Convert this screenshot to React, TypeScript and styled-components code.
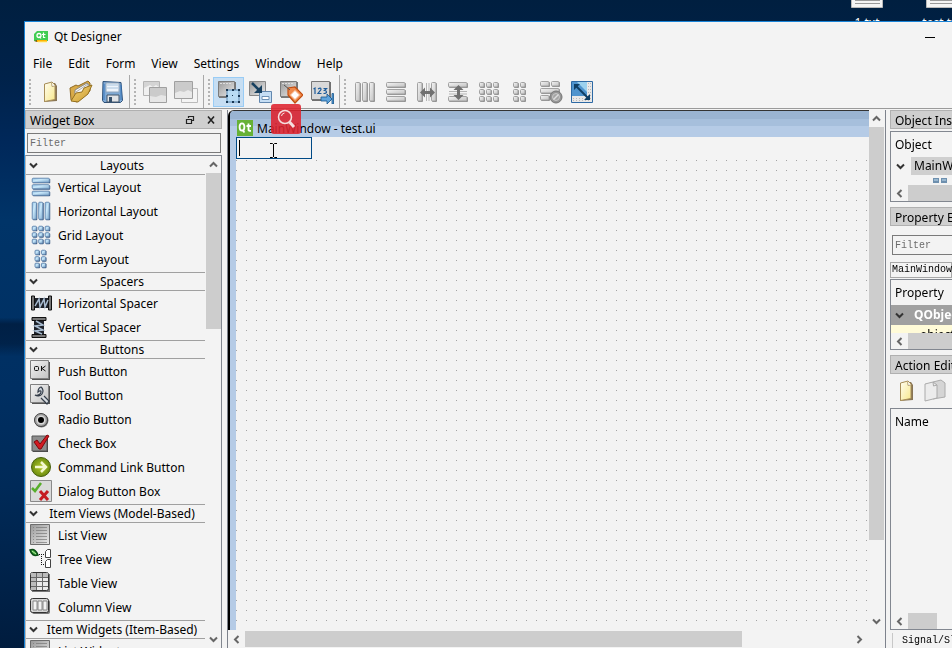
import React from "react";
import styled, { createGlobalStyle, css } from "styled-components";

const GlobalStyle = createGlobalStyle`
  *, *::before, *::after { box-sizing: border-box; }
  body { margin: 0; overflow: hidden; background: #00264d; }
  body, button, input, select {
    font-family: "Noto Sans", "Noto Sans CJK SC", sans-serif;
    font-size: 12px;
    line-height: 18px;
    color: #000;
  }
  button { border: 0; padding: 0; background: none; text-align: left; }
  svg { display: block; flex: none; }
`;

/* ---------- desktop and window ---------- */

const Desktop = styled.div`
  position: relative;
  display: flex;
  height: 100vh;
  padding: 21px 0 0 24px;
  overflow: hidden;
  background:
    linear-gradient(180deg, transparent 49%, rgba(0, 20, 48, 0.6) 50%, rgba(0, 20, 48, 0.5) 53%, transparent 55%),
    linear-gradient(180deg, #001f40 0, #00224a 12%, #00285a 22%, #003468 34%, #002f62 60%, #002a58 75%, #001c3e 100%);
`;

const DesktopFiles = styled.div`
  position: absolute;
  top: 0;
  right: 0;
  display: flex;
  width: 101px;
  height: 21px;
  gap: 43px;
  overflow: hidden;
`;

const DesktopFile = styled.div`
  display: flex;
  flex: none;
  flex-direction: column;
  align-items: center;
  width: 32px;
  gap: 6px;
  color: #fff;
  font-size: 12px;
  line-height: 18px;
  white-space: nowrap;
`;

const Window = styled.main`
  position: relative;
  display: flex;
  flex: 1;
  flex-direction: column;
  min-width: 0;
  border-top: 1px solid #1883d7;
  border-left: 1px solid #1883d7;
  background: #f3f3f3;
`;

const TitleBar = styled.header`
  display: flex;
  align-items: center;
  flex: none;
  height: 30px;
  padding: 0 16px 0 8px;
  gap: 5px;
`;

const Title = styled.h1`
  flex: 1;
  margin: 0;
  font-size: 12px;
  font-weight: 400;
`;

const MenuBar = styled.nav`
  display: flex;
  align-items: center;
  flex: none;
  height: 23px;
  padding-left: 8px;
  gap: 16px;
`;

const ToolBar = styled.div`
  display: flex;
  flex: none;
  height: 34px;
  border-bottom: 1px solid #9a9a9a;
`;

const ToolGroup = styled.div<{ $last?: boolean }>`
  display: flex;
  align-items: center;
  padding: 0 2px 0 4px;
  border-right: ${(p) => (p.$last ? "0" : "1px solid #a9a9a9")};
`;

const Handle = styled.span`
  width: 2px;
  height: 26px;
  margin-right: 3px;
  background: repeating-linear-gradient(#b4b4b4 0 2px, transparent 2px 4px);
`;

const ToolButton = styled.button<{ $on?: boolean }>`
  display: grid;
  place-items: center;
  width: 31px;
  height: 30px;
  ${(p) =>
    p.$on &&
    css`
      border: 1px solid #99ccf5;
      background: #c6def3;
    `}
`;

const Body = styled.div`
  display: flex;
  flex: 1;
  min-height: 0;
  padding-top: 1px;
`;

/* ---------- shared dock parts ---------- */

const DockTitle = styled.h2`
  display: flex;
  align-items: center;
  flex: none;
  height: 19px;
  margin: 0;
  padding: 0 5px 0 4px;
  gap: 11px;
  border: 1px solid #b0b0b0;
  background: #cfcfcf;
  font-size: 12px;
  font-weight: 400;
  white-space: nowrap;

  span { flex: 1; padding-top: 2px; }
`;

const FilterInput = styled.input`
  flex: none;
  height: 20px;
  min-width: 0;
  padding: 0 2px;
  border: 1px solid #7a7a7a;
  border-radius: 0;
  outline: 0;
  background: #f3f3f3;
  font-family: "Liberation Mono", monospace;
  font-size: 10px;

  &::placeholder { color: #6c6c6c; opacity: 1; }
`;

const Track = styled.div<{ $dir: "row" | "column" }>`
  display: flex;
  flex: none;
  flex-direction: ${(p) => p.$dir};
  ${(p) => (p.$dir === "row" ? "height: 16px;" : "width: 15px;")}
`;

const TrackRun = styled.div<{ $dir: "row" | "column" }>`
  display: flex;
  flex: 1;
  flex-direction: ${(p) => p.$dir};
`;

const Thumb = styled.div<{ $part: number }>`
  flex: 0 0 ${(p) => p.$part}%;
  background: #cdcdcd;
`;

const ArrowButton = styled.button`
  display: grid;
  place-items: center;
  flex: none;
  width: 17px;
  height: 17px;
`;

const VArrowButton = styled(ArrowButton)`
  width: 15px;
`;

/* ---------- widget box ---------- */

const WidgetDock = styled.aside`
  display: flex;
  flex: none;
  flex-direction: column;
  width: 197px;
`;

const WidgetFilter = styled(FilterInput)`
  margin: 4px 1px 2px 2px;
`;

const WidgetList = styled.div`
  display: flex;
  flex: 1;
  min-height: 0;
  border: 1px solid #828790;
  border-bottom: 0;
  border-left-color: #b8b8b8;
`;

const WidgetScroll = styled.div`
  flex: 1;
  overflow: hidden;
  margin-right: 1px;
`;

const SectionHead = styled.button`
  display: flex;
  align-items: center;
  width: 100%;
  height: 19px;
  padding-left: 2px;
  border-top: 1px solid #a0a0a0;
  border-bottom: 1px solid #a0a0a0;
  white-space: nowrap;

  section:first-child > & { border-top-color: transparent; }
  span { flex: 1; text-align: center; }
`;

const Items = styled.ul`
  margin: 0;
  padding: 0 0 1px;
  list-style: none;
`;

const Item = styled.li`
  display: flex;
  align-items: center;
  height: 24px;
  padding-left: 3px;
  gap: 5px;
  white-space: nowrap;

  span { padding-top: 2px; }
`;

/* ---------- form editor ---------- */

const Editor = styled.section`
  display: flex;
  flex: 1;
  flex-direction: column;
  min-width: 0;
  margin-left: 5px;
  border: solid #7d828c;
  border-width: 0 1px;
`;

const EditorRow = styled.div`
  display: flex;
  flex: 1;
  min-height: 0;
  padding-right: 1px;
`;

const FormWindow = styled.div`
  display: flex;
  flex: 1;
  flex-direction: column;
  min-width: 0;
  border-top: 1px solid #333;
  border-left: 2px solid #000;
  border-top-left-radius: 6px;
`;

const FormTitle = styled.div`
  display: flex;
  align-items: center;
  flex: none;
  height: 26px;
  padding: 8px 0 0 7px;
  gap: 4px;
  border-top-left-radius: 4px;
  background: linear-gradient(#9ab4d2 0 8px, #a6bfdc 8px 15px, #b5cbe6 15px);

  span { padding-top: 2px; }
`;

const FormInner = styled.div`
  display: flex;
  flex: 1;
  flex-direction: column;
  align-items: flex-start;
  min-height: 0;
  border-left: 6px solid #b5cbe6;
  background: #f3f3f3;
`;

const MenuEdit = styled.input`
  flex: none;
  width: 76px;
  height: 22px;
  margin-bottom: 1px;
  padding: 0 3px;
  border: 1px solid #004a86;
  border-radius: 0;
  outline: 0;
  background: linear-gradient(#000, #000) 2px 2px / 1px 16px no-repeat #f3f3f3;
  caret-color: transparent;
`;

const DotCanvas = styled.div`
  flex: 1;
  align-self: stretch;
  background: conic-gradient(from 0deg at 1px 1px, transparent 75%, #a4a4a4 0) 0 0 / 10px 10px;
`;

const EditorFoot = styled.div`
  padding: 1px 17px 1px 0;
`;

/* ---------- right docks ---------- */

const RightDocks = styled.aside`
  display: flex;
  flex: none;
  flex-direction: column;
  width: 62px;
  margin-left: 4px;
  overflow: hidden;
  white-space: nowrap;
`;

const RightTitle = styled(DockTitle)`
  border-right: 0;
`;

const Panel = styled.div<{ $height?: number }>`
  display: flex;
  flex: ${(p) => (p.$height ? `0 0 ${p.$height}px` : "1")};
  flex-direction: column;
  overflow: hidden;
  border: 1px solid #828790;
  border-right: 0;
`;

const ObjectPanel = styled(Panel)`
  margin: 2px 0 5px;
`;

const PanelHead = styled.div`
  flex: none;
  height: 25px;
  padding-left: 4px;
  line-height: 25px;
`;

const TreeRow = styled.div`
  display: flex;
  align-items: center;
  flex: none;
  height: 18px;
  padding-left: 4px;
  gap: 5px;
`;

const Selected = styled.span`
  flex: 1;
  padding-left: 3px;
  background: #cfcfcf;
`;

const ChildPeek = styled.div`
  flex: 1;
  padding: 2px 0 0 42px;
  overflow: hidden;
`;

const PropertyFilter = styled(FilterInput)`
  width: 120px;
  margin: 9px 0 7px 2px;
`;

const ClassLabel = styled.div`
  flex: none;
  height: 16px;
  margin-bottom: 1px;
  padding-left: 1px;
  border: 1px solid #a8a8a8;
  font-family: "Liberation Mono", monospace;
  font-size: 10px;
  line-height: 14px;
`;

const GroupRow = styled.div`
  display: flex;
  align-items: center;
  flex: none;
  height: 20px;
  padding-left: 3px;
  gap: 9px;
  background: #a0a0a0;
  color: #fff;
  font-weight: 700;
`;

const PropertyPeek = styled.div`
  flex: 1;
  padding-left: 29px;
  overflow: hidden;
  background: #fffbd8;
  line-height: 20px;
`;

const ActionTitle = styled(RightTitle)`
  margin-top: 5px;
`;

const ActionTools = styled.div`
  display: flex;
  align-items: center;
  flex: none;
  height: 34px;
  padding-left: 4px;
  gap: 5px;
`;

const ActionBody = styled.div`
  flex: 1;
`;

const TabStrip = styled.div`
  flex: none;
  height: 18px;
  padding-left: 2px;
`;

const Tab = styled.button`
  width: 110px;
  height: 17px;
  padding-left: 9px;
  border: 1px solid #c8c8c8;
  border-top: 0;
  font-family: "Liberation Mono", monospace;
  font-size: 10px;
  line-height: 16px;
`;

/* ---------- overlays ---------- */

const SearchBadge = styled.button`
  position: absolute;
  top: 82px;
  left: 246px;
  display: grid;
  place-items: center;
  width: 30px;
  height: 30px;
  border-radius: 3px;
  background: rgba(222, 34, 46, 0.88);
`;

const TextCursor = styled.svg`
  position: absolute;
  top: 120px;
  left: 244px;
`;

/* ---------- icons ---------- */

type ArrowDir = "up" | "down" | "left" | "right";
const turn: Record<ArrowDir, number> = { down: 0, left: 90, up: 180, right: 270 };

const Chevron = ({ dir = "down", color = "#666" }: { dir?: ArrowDir; color?: string }) => (
  <svg width="11" height="11" viewBox="0 0 11 11" aria-hidden="true">
    <path d="M2 3.5 5.5 7 9 3.5" fill="none" stroke={color} strokeWidth="2" transform={`rotate(${turn[dir]} 5.5 5.5)`} />
  </svg>
);

const HiddenSvg = styled.svg`
  position: absolute;
`;

const IconDefs = () => (
  <HiddenSvg width="0" height="0" aria-hidden="true">
    <defs>
      <linearGradient id="blue" x1="0" y1="0" x2="1" y2="1"><stop offset="0" stopColor="#8fc0e4" /><stop offset=".4" stopColor="#c9e8fa" /><stop offset="1" stopColor="#7ca6cc" /></linearGradient>
      <linearGradient id="grey" x1="0" y1="0" x2="1" y2="1"><stop offset="0" stopColor="#f4f4f4" /><stop offset="1" stopColor="#c2c2c2" /></linearGradient>
      <linearGradient id="steel" x1="0" y1="0" x2="1" y2="1"><stop offset="0" stopColor="#989898" /><stop offset="1" stopColor="#ececec" /></linearGradient>
      <linearGradient id="page" x1="0" y1="0" x2="1" y2="1"><stop offset="0" stopColor="#fffdf0" /><stop offset="1" stopColor="#f8e88c" /></linearGradient>
      <linearGradient id="gold" x1="0" y1="0" x2="1" y2="1"><stop offset="0" stopColor="#f8d878" /><stop offset="1" stopColor="#c89830" /></linearGradient>
      <radialGradient id="green"><stop offset="0" stopColor="#b4c82c" /><stop offset="1" stopColor="#6c8c10" /></radialGradient>
    </defs>
  </HiddenSvg>
);

const Svg = ({ children, small }: { children: React.ReactNode; small?: boolean }) => (
  <svg width="24" height="24" viewBox={small ? "-1 -1 26 26" : "0 0 24 24"} aria-hidden="true">{children}</svg>
);

type Box = [number, number, number, number];
const vBars: Box[] = [[3, 3, 5, 19], [10, 3, 5, 19], [17, 3, 5, 19]];
const hBars: Box[] = [[3, 3, 19, 5], [3, 10, 19, 5], [3, 17, 19, 5]];
const gridCells: Box[] = [3, 10, 17].flatMap((y) => [3, 10, 17].map((x): Box => [x, y, 5, 5]));
const formCells: Box[] = [3, 10, 17].flatMap((y) => [6, 13].map((x): Box => [x, y, 5, 5]));

const Boxes = ({ boxes, grey }: { boxes: Box[]; grey?: boolean }) => (
  <>
    {boxes.map(([x, y, w, h]) => (
      <g key={`${x}-${y}`}>
        <rect x={x} y={y} width={w} height={h} rx="1" fill={grey ? "#8f8f8f" : "#425f86"} />
        <rect x={x - 0.5} y={y - 0.5} width={w - 0.5} height={h - 0.5} rx="1" fill={grey ? "url(#grey)" : "url(#blue)"} stroke={grey ? "#a2a2a2" : "#6488b0"} />
      </g>
    ))}
  </>
);

const QtIcon = () => (
  <svg width="16" height="16" viewBox="0 0 16 16" aria-hidden="true">
    <path d="M4 2h11v10H1V5z" fill="#41cd52" />
    <circle cx="6" cy="6.500" r="2" fill="none" stroke="#fff" strokeWidth="1.300" />
    <path d="m6.500 7.500 1.500 2M10.500 3.500v5h1.800M9 5.500h3.500" fill="none" stroke="#fff" strokeWidth="1.200" />
    <path d="M4 11h10v2H4z" fill="#ffb400" /><path d="m1 12 3-1v2z" fill="#775500" /><path d="M5 13h9" stroke="#fff08a" />
  </svg>
);

const FormQtIcon = () => (
  <svg width="16" height="16" viewBox="0 0 16 16" aria-hidden="true">
    <path d="M0 0h16v16H0z" fill="#67b136" />
    <ellipse cx="5" cy="7" rx="2.400" ry="3.600" fill="none" stroke="#fff" strokeWidth="1.800" />
    <path d="m5.500 10 2 2.500M11.500 3.500v6.500q0 1 2.500.8M9.500 6h4.500" fill="none" stroke="#fff" strokeWidth="1.800" />
  </svg>
);

const NewIcon = () => (
  <Svg>
    <path d="m9 3-3 2v17l13-1V6l-2-3z" fill="#877455" />
    <path d="M6.500 4 14 2l3 3v14.500l-10.500 2z" fill="url(#page)" stroke="#a88e58" />
    <path d="m13.500 2.500.5 4 3-.5" fill="#fff" stroke="#b9a679" />
  </Svg>
);

const OpenIcon = () => (
  <Svg>
    <path d="m1 8 6-3 2 1 10-5 2 2v8L8 22l-6-2z" fill="#d8aa48" stroke="#8f6a24" />
    <path d="m6 10 12-7 2 2-2 9L6 19z" fill="#f8f8f8" stroke="#888" />
    <path d="m7 12 12-8v8" fill="none" stroke="#aaa" />
    <path d="m2 21 5-8 6-1 2-4 8-3-4 9L9 22z" fill="url(#gold)" stroke="#94701f" />
  </Svg>
);

const SaveIcon = () => (
  <Svg>
    <path d="m3 1.500 18 1 1.500 18-2 2H4l-1.500-2z" fill="#7fa9d4" stroke="#2d5078" />
    <path d="M6 3h13v9H6z" fill="#eef4fb" stroke="#93a7bc" />
    <path d="M7 5h11M7 8h11" stroke="#cbdcec" strokeWidth="2" />
    <path d="M7 15h12v7H7z" fill="#e1e3e6" stroke="#46586d" /><path d="M9 17h3v5H9z" fill="#36506b" />
    <path d="M4 4v16M21 5v15" stroke="#3a78bd" />
  </Svg>
);

const SendBackIcon = ({ front }: { front?: boolean }) => (
  <Svg>
    {!front && (
      <>
        <path d="M.5 1.500h16v14H.5z" fill="#f0f0f0" stroke="#b4b4b4" /><path d="M1 2h15v5l-3-2-3 2-3-2-6 3z" fill="#d4d4d4" />
        <path d="M6.500 7.500h17v15h-17z" fill="#e6e6e6" stroke="#a0a0a0" /><path d="M7 8h16v8l-5-1-5 2-6-1z" fill="#cbcbcb" />
      </>
    )}
    {front && (
      <>
        <path d="M7.500 8.500h16v14h-16z" fill="#f4f4f4" stroke="#bababa" />
        <path d="M.5 1.500h18v17H.5z" fill="#e9e9e9" stroke="#a0a0a0" /><path d="M1 2h17v10l-4-2-4 2-4-1-5 2z" fill="#cbcbcb" />
      </>
    )}
  </Svg>
);

const EditBase = () => (
  <>
    <path d="M2 2h17v16H2z" fill="#777" /><path d="M1.500 1.500h16v15h-16z" fill="url(#steel)" stroke="#7b7b7b" />
    <path d="M3 3.500h12" stroke="#dedede" strokeDasharray="2 1" />
  </>
);

const WidgetsIcon = () => (
  <Svg>
    <EditBase />
    <path d="M10 10h12v12H10z" fill="#b9dcf4" stroke="#5d8bb4" />
    {[10, 16, 22].flatMap((y) =>
      [10, 16, 22].map((x) => {
        const side = x === 16 && y === 16 ? 1 : 2;
        return <rect key={`${x}-${y}`} x={x - 1} y={y - 1} width={side} height={side} fill="#173652" />;
      }),
    )}
  </Svg>
);

const SignalsIcon = () => (
  <Svg>
    <path d="M1.500 1.500h16v14h-16z" fill="url(#steel)" stroke="#868686" />
    <path d="M11.500 11.500h12v11h-12z" fill="#c5def4" stroke="#6287ae" /><path d="M14 16.500h7v3h-7z" fill="#fff" stroke="#6c91b5" />
    <path d="m4 3 7 7" stroke="#17405f" strokeWidth="2.500" /><path d="M14 5v8H6z" fill="#17405f" />
  </Svg>
);

const BuddiesIcon = () => (
  <Svg>
    <EditBase />
    <path d="m9 8 7-1 8 8-8 8-7-8z" fill="#ef8a4c" stroke="#c24d10" strokeWidth="1.200" />
    <path d="m16 10.500 4.500 4.500-4.500 4.500-4.500-4.500z" fill="#fff" stroke="#f8c8a8" /><path d="m5 5 6 5" stroke="#555" />
  </Svg>
);

const TabOrderIcon = () => (
  <Svg>
    <path d="M2 2h19v19H2z" fill="#707070" /><path d="M1.500 1.500h18v18h-18z" fill="#d9d9d9" stroke="#777" />
    <path d="m3.500 9 1.500-1v6M8 9q3-2 3 .5L8 13.500h3.500M13.500 8.500h3l-2 2q2 0 2 1.500t-3 1.500" fill="none" stroke="#1d5b99" strokeWidth="1.200" />
    <path d="M11 17h6v-3l5 5-5 5v-3h-6zM22 13.500h1.500V24H22z" fill="#5ea3dc" stroke="#17568d" strokeWidth=".8" />
  </Svg>
);

const HSplitIcon = () => (
  <Svg>
    <Boxes boxes={[[3, 3, 5, 19], [17, 3, 5, 19]]} grey />
    <path d="M11.500 3v18M14 3v18" stroke="#b5b5b5" /><path d="m5 12.500 5-5v3.500h5V7.500l5 5-5 5V14h-5v3.500z" fill="#707070" />
  </Svg>
);

const VSplitIcon = () => (
  <Svg>
    <Boxes boxes={[[3, 3, 19, 5], [3, 17, 19, 5]]} grey />
    <path d="M3 11.500h18M3 14h18" stroke="#b5b5b5" /><path d="m12.500 5 5 5H14v5h3.500l-5 5-5-5H11v-5H7.500z" fill="#707070" />
  </Svg>
);

const BreakIcon = () => (
  <Svg>
    <Boxes boxes={[[2, 2, 9, 5], [13, 2, 8, 5], [2, 9, 19, 5], [2, 16, 9, 5]]} grey />
    <circle cx="17" cy="17" r="6" fill="#969696" stroke="#777" /><circle cx="17" cy="17" r="3.500" fill="#a5a5a5" stroke="#c8c8c8" /><path d="m14.500 19.500 5-5" stroke="#ddd" strokeWidth="1.500" />
  </Svg>
);

const AdjustIcon = () => (
  <Svg>
    <path d="M1.500 1.500h21v21h-21z" fill="#e8e8e8" stroke="#2d69a4" />
    <path d="M2 2h15v14H2z" fill="#4f94ce" /><path d="M7 2h10v10z" fill="#9bd1ee" />
    <path d="M3 18.500h18M3 20.500h18M18.500 3v18M20.500 3v18" stroke="#b9b9b9" strokeDasharray="1 2" />
    <path d="m6 6 12 12" stroke="#103f65" strokeWidth="2" /><path d="M4 4h6l-6 6zM20 20h-6l6-6z" fill="#103f65" />
  </Svg>
);

const SpringShape = () => (
  <>
    <path d="M2.500 5h3v14h-3zM19.500 5h3v14h-3z" fill="#777" stroke="#111" />
    <path d="M6 7h13v10H6z" fill="#1e222a" /><path d="m6 15 4-7 1 8 4-8 1 8 3-7" fill="none" stroke="#a9bdd2" strokeWidth="1.500" />
  </>
);

const HSpacerIcon = () => (
  <Svg><SpringShape /></Svg>
);

const VSpacerIcon = () => (
  <Svg><g transform="translate(-2 0) rotate(90 12 12)"><SpringShape /></g></Svg>
);

const Plate = () => (
  <><path d="M3 3h18v18H3z" fill="#555" /><path d="M1.500 1.500h18v18h-18z" fill="url(#grey)" stroke="#808080" /></>
);

const PushIcon = () => (
  <Svg>
    <Plate />
    <rect x="5.500" y="7.500" width="4" height="4" rx="1" fill="none" stroke="#111" /><path d="M12.500 7v5M16.500 7l-3.500 2.500 3.500 2.500" fill="none" stroke="#111" />
  </Svg>
);

const ToolIcon = () => (
  <Svg>
    <Plate />
    <path d="M12 4a5 5 0 1 1-6 8c3 1 6-1 6-3s-2-1-3 0q0-4 3-5z" fill="#c9d0d8" stroke="#333c48" strokeWidth="1.200" />
    <path d="m15 13 5 5-2 3-6-6" fill="#d7dce1" stroke="#333c48" strokeWidth="1.200" />
  </Svg>
);

const RadioIcon = () => (
  <Svg><circle cx="12.500" cy="13.500" r="7" fill="#777" /><circle cx="12" cy="13" r="6.500" fill="#a5a5a5" stroke="#444" /><circle cx="12" cy="13" r="4.500" fill="#d8d8d8" /><circle cx="12" cy="13" r="3" fill="#000" /></Svg>
);

const CheckIcon = () => (
  <Svg>
    <path d="M4 6h15v15H4z" fill="#444" /><path d="M3 5h15v15H3z" fill="#8d8d8d" stroke="#555" />
    <path d="m5 11 3-2 3 4 7-9 2 1-8 13h-2z" fill="#d21b22" stroke="#7d080d" />
  </Svg>
);

const CommandIcon = () => (
  <Svg><circle cx="12" cy="12" r="9.500" fill="url(#green)" stroke="#48600e" /><path d="M6 12h11m-5-5 5 5-5 5" fill="none" stroke="#f3f8d0" strokeWidth="2.500" /></Svg>
);

const DialogIcon = () => (
  <Svg>
    <path d="M1.500 1.500h21v21h-21z" fill="#dadada" stroke="#8a8a8a" />
    <path d="m3 9 3 3 6-8" fill="none" stroke="#58ae2b" strokeWidth="2.500" /><path d="m11 12 8 9m0-9-8 9" stroke="#c51c22" strokeWidth="3" />
  </Svg>
);

const ListIcon = () => (
  <Svg>
    <path d="M1.500 1.500h19v20h-19z" fill="url(#steel)" stroke="#6e6e6e" />
    <path d="M4 4.500h14M4 7.500h14M4 10.500h14M4 13.500h14M4 16.500h14M4 19.500h14" stroke="#777" strokeOpacity=".7" strokeDasharray="1 2 11 9" />
  </Svg>
);

const TreeIcon = () => (
  <Svg>
    <path d="M1 3q5-2 8 5-6 2-8-5z" fill="#36a33a" stroke="#0b4b16" strokeWidth="1.500" /><path d="m3 4 4 3" stroke="#bdeb9b" />
    <path d="M10 7.500h6M12.500 7v10M12 17.500h4" fill="none" stroke="#111" strokeDasharray="1 1" />
    {[3, 13].map((y) => <path key={y} d={`M18.500 ${y - 0.5}h3v8h-5v-6z`} fill="#fff" stroke="#444" />)}
  </Svg>
);

const TableIcon = () => (
  <Svg>
    <path d="M3 3h18v18H3z" fill="#777" /><rect x="1.500" y="1.500" width="18" height="18" rx="2" fill="#e9e9e9" stroke="#333" />
    <path d="M2 2h17v4H2zM2 6h5v13H2z" fill="#bbb" /><path d="M2 6.500h17M2 10.500h17M2 15.500h17M7.500 2v17M13.500 2v17" stroke="#666" />
  </Svg>
);

const ColumnIcon = () => (
  <Svg>
    <rect x="3" y="5" width="18" height="14" rx="2" fill="#777" /><rect x="1.500" y="3.500" width="18" height="14" rx="2" fill="#d5d5d5" stroke="#333" />
    <path d="M4 6h4v9H4zM9 6h4v9H9zM14 6h4v9h-4z" fill="#f3f3f3" stroke="#888" />
  </Svg>
);

const FloatIcon = () => (
  <svg width="10" height="10" viewBox="0 0 10 10" aria-hidden="true"><path d="M3.500 3V1.500h5v4H7M1.500 4.500h5v4h-5zM3 1.500h6M1 4.500h6" fill="none" stroke="#222" strokeWidth="1.200" /></svg>
);
const CloseIcon = () => (
  <svg width="10" height="10" viewBox="0 0 10 10" aria-hidden="true"><path d="m2 1.500 6 7m0-7-6 7" stroke="#222" strokeWidth="1.600" /></svg>
);

const FileDocIcon = () => (
  <svg width="32" height="8" viewBox="0 0 32 8" aria-hidden="true"><path d="M.5-1h31v8.500H.5z" fill="#f4f4f4" stroke="#b9b9b9" /><path d="M4 .5h25M4 3.500h25" stroke="#999" /></svg>
);

const CopyIcon = () => (
  <Svg>
    <path d="m10 3 8-2 4 3v14l-12 2z" fill="#d5d5d5" stroke="#aaa" /><path d="m2 5 8-2 4 3v13L2 22z" fill="#ececec" stroke="#aaa" /><path d="m10 3 .5 4L14 6" fill="none" stroke="#aaa" />
  </Svg>
);

/* ---------- data ---------- */

type Tool = { name: string; icon: React.ReactNode; on?: boolean };

const toolGroups: Tool[][] = [
  [
    { name: "New", icon: <NewIcon /> },
    { name: "Open", icon: <OpenIcon /> },
    { name: "Save", icon: <SaveIcon /> },
  ],
  [
    { name: "Send to Back", icon: <SendBackIcon /> },
    { name: "Bring to Front", icon: <SendBackIcon front /> },
  ],
  [
    { name: "Edit Widgets", icon: <WidgetsIcon />, on: true },
    { name: "Edit Signals/Slots", icon: <SignalsIcon /> },
    { name: "Edit Buddies", icon: <BuddiesIcon /> },
    { name: "Edit Tab Order", icon: <TabOrderIcon /> },
  ],
  [
    { name: "Lay Out Horizontally", icon: <Svg><Boxes boxes={vBars} grey /></Svg> },
    { name: "Lay Out Vertically", icon: <Svg><Boxes boxes={hBars} grey /></Svg> },
    { name: "Lay Out Horizontally in Splitter", icon: <HSplitIcon /> },
    { name: "Lay Out Vertically in Splitter", icon: <VSplitIcon /> },
    { name: "Lay Out in a Grid", icon: <Svg><Boxes boxes={gridCells} grey /></Svg> },
    { name: "Lay Out in a Form Layout", icon: <Svg><Boxes boxes={formCells} grey /></Svg> },
    { name: "Break Layout", icon: <BreakIcon /> },
    { name: "Adjust Size", icon: <AdjustIcon /> },
  ],
];

const sections: { title: string; items: [string, React.ReactNode][] }[] = [
  {
    title: "Layouts",
    items: [
      ["Vertical Layout", <Svg small><Boxes boxes={hBars} /></Svg>],
      ["Horizontal Layout", <Svg small><Boxes boxes={vBars} /></Svg>],
      ["Grid Layout", <Svg small><Boxes boxes={gridCells} /></Svg>],
      ["Form Layout", <Svg small><Boxes boxes={formCells} /></Svg>],
    ],
  },
  { title: "Spacers", items: [["Horizontal Spacer", <HSpacerIcon />], ["Vertical Spacer", <VSpacerIcon />]] },
  {
    title: "Buttons",
    items: [
      ["Push Button", <PushIcon />],
      ["Tool Button", <ToolIcon />],
      ["Radio Button", <RadioIcon />],
      ["Check Box", <CheckIcon />],
      ["Command Link Button", <CommandIcon />],
      ["Dialog Button Box", <DialogIcon />],
    ],
  },
  {
    title: "Item Views (Model-Based)",
    items: [
      ["List View", <ListIcon />],
      ["Tree View", <TreeIcon />],
      ["Table View", <TableIcon />],
      ["Column View", <ColumnIcon />],
    ],
  },
  { title: "Item Widgets (Item-Based)", items: [["List Widget", <ListIcon />]] },
];

const VScroll = ({ part }: { part: number }) => (
  <Track $dir="column">
    <VArrowButton aria-label="Scroll up"><Chevron dir="up" /></VArrowButton>
    <TrackRun $dir="column"><Thumb $part={part} /></TrackRun>
    <VArrowButton aria-label="Scroll down"><Chevron /></VArrowButton>
  </Track>
);

const HScroll = ({ part, end }: { part: number; end?: boolean }) => (
  <Track $dir="row">
    <ArrowButton aria-label="Scroll left"><Chevron dir="left" /></ArrowButton>
    <TrackRun $dir="row"><Thumb $part={part} /></TrackRun>
    {end && <ArrowButton aria-label="Scroll right"><Chevron dir="right" /></ArrowButton>}
  </Track>
);

export default function App() {
  return (
    <Desktop>
      <GlobalStyle />
      <IconDefs />
      <DesktopFiles>
        <DesktopFile><FileDocIcon />1.txt</DesktopFile>
        <DesktopFile><FileDocIcon />test.txt</DesktopFile>
      </DesktopFiles>
      <Window>
        <TitleBar>
          <QtIcon />
          <Title>Qt Designer</Title>
          <button aria-label="Minimize">
            <svg width="11" height="11" viewBox="0 0 11 11"><path d="M0 5.500h10" stroke="#000" /></svg>
          </button>
        </TitleBar>
        <MenuBar aria-label="Main menu">
          {["File", "Edit", "Form", "View", "Settings", "Window", "Help"].map((m) => <button key={m}>{m}</button>)}
        </MenuBar>
        <ToolBar role="toolbar">
          {toolGroups.map((tools, i) => (
            <ToolGroup key={i} $last={i === toolGroups.length - 1}>
              <Handle />
              {tools.map((t) => <ToolButton key={t.name} aria-label={t.name} aria-pressed={t.on} $on={t.on}>{t.icon}</ToolButton>)}
            </ToolGroup>
          ))}
        </ToolBar>
        <Body>
          <WidgetDock>
            <DockTitle>
              <span>Widget Box</span>
              <button aria-label="Float"><FloatIcon /></button>
              <button aria-label="Close"><CloseIcon /></button>
            </DockTitle>
            <WidgetFilter aria-label="Filter widgets" placeholder="Filter" />
            <WidgetList>
              <WidgetScroll>
                {sections.map((s) => (
                  <section key={s.title}>
                    <SectionHead><Chevron color="#333" /><span>{s.title}</span></SectionHead>
                    <Items>
                      {s.items.map(([name, icon]) => <Item key={name}>{icon}<span>{name}</span></Item>)}
                    </Items>
                  </section>
                ))}
              </WidgetScroll>
              <VScroll part={34} />
            </WidgetList>
          </WidgetDock>

          <Editor>
            <EditorRow>
              <FormWindow>
                <FormTitle><FormQtIcon /><span>MainWindow - test.ui</span></FormTitle>
                <FormInner>
                  <MenuEdit aria-label="Menu title" autoFocus />
                  <DotCanvas />
                </FormInner>
              </FormWindow>
              <VScroll part={85} />
            </EditorRow>
            <EditorFoot><HScroll part={82} end /></EditorFoot>
          </Editor>

          <RightDocks>
            <RightTitle><span>Object Inspector</span></RightTitle>
            <ObjectPanel $height={71}>
              <PanelHead>Object</PanelHead>
              <TreeRow><Chevron color="#333" /><Selected>MainWindow</Selected></TreeRow>
              <ChildPeek>
                <svg width="14" height="8" viewBox="0 0 14 8" aria-hidden="true"><path d="M0 1h6v5H0zM8 1h6v5H8z" fill="#6d8fae" /><path d="M1 3h4M9 3h4" stroke="#c5e0f2" /></svg>
              </ChildPeek>
              <HScroll part={100} />
            </ObjectPanel>
            <RightTitle><span>Property Editor</span></RightTitle>
            <PropertyFilter aria-label="Filter properties" placeholder="Filter" />
            <ClassLabel>MainWindow : QMainWindow</ClassLabel>
            <Panel $height={71}>
              <PanelHead>Property</PanelHead>
              <GroupRow><Chevron color="#333" />QObject</GroupRow>
              <PropertyPeek>objectName</PropertyPeek>
              <HScroll part={100} />
            </Panel>
            <ActionTitle><span>Action Editor</span></ActionTitle>
            <ActionTools>
              <button aria-label="New action"><NewIcon /></button>
              <button aria-label="Copy action"><CopyIcon /></button>
            </ActionTools>
            <Panel>
              <PanelHead>Name</PanelHead>
              <ActionBody />
              <HScroll part={66} />
            </Panel>
            <TabStrip><Tab>Signal/Slot Editor</Tab></TabStrip>
          </RightDocks>
        </Body>
        <SearchBadge aria-label="Search">
          <svg width="22" height="22" viewBox="0 0 22 22" fill="none" stroke="#f5dede"><circle cx="10" cy="9" r="6.500" strokeWidth="1.500" /><path d="M6.500 8a3.500 3.500 0 0 1 3-3" /><path d="m14.500 14 4.500 5" strokeWidth="3" /></svg>
        </SearchBadge>
        <TextCursor width="9" height="17" viewBox="0 0 9 17" aria-hidden="true">
          <path d="M1 1.500h2.500l1 1 1-1H8M4.500 2v13M1 15.500h2.500l1-1 1 1H8" fill="none" stroke="#000" />
        </TextCursor>
      </Window>
    </Desktop>
  );
}
